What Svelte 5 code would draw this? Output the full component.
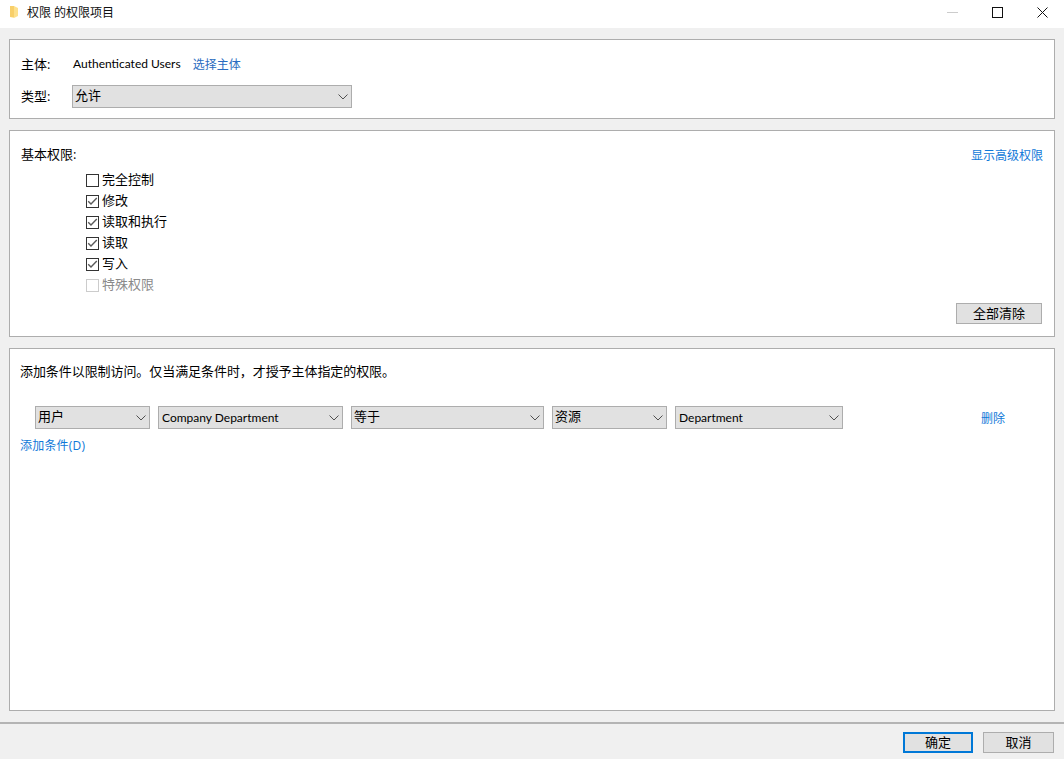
<script>
  const perms = [
    { label: "完全控制", checked: false },
    { label: "修改", checked: true },
    { label: "读取和执行", checked: true },
    { label: "读取", checked: true },
    { label: "写入", checked: true },
    { label: "特殊权限", checked: false, disabled: true }
  ];

  const conditions = [
    { text: "用户", width: 115 },
    { text: "Company Department", width: 185, latin: true },
    { text: "等于", width: 193 },
    { text: "资源", width: 115 },
    { text: "Department", width: 168, latin: true }
  ];
</script>

{#snippet chevron()}
  <svg class="chev" width="10" height="6" viewBox="0 0 10 6" aria-hidden="true">
    <path d="M0.5 0.5 L5 5 L9.5 0.5" fill="none" stroke="#505050" stroke-width="1" />
  </svg>
{/snippet}

<div class="window">
  <header class="titlebar">
    <svg class="folder" width="10" height="14" viewBox="0 0 10 14" aria-hidden="true">
      <path d="M1 1 H5 L9 3 V11 L5 13 L1 12 Z" fill="#fde08c" />
      <path d="M1 1 H5 V12 H1 Z" fill="#f8cf6a" />
    </svg>
    <span class="title">权限 的权限项目</span>
    <div class="controls">
      <span class="ctl">
        <svg width="11" height="11" viewBox="0 0 11 11"><path d="M0 5.5 H11" stroke="#ccc" /></svg>
      </span>
      <span class="ctl">
        <svg width="11" height="11" viewBox="0 0 11 11"><rect x="0.5" y="0.5" width="10" height="10" fill="none" stroke="#111" /></svg>
      </span>
      <span class="ctl">
        <svg width="11" height="11" viewBox="0 0 11 11"><path d="M0.5 0.5 L10.5 10.5 M10.5 0.5 L0.5 10.5" stroke="#111" /></svg>
      </span>
    </div>
  </header>

  <main class="content">
    <section class="panel principal">
      <div class="row">
        <span class="lbl">主体:</span>
        <span class="latin">Authenticated Users</span>
        <span class="link pick">选择主体</span>
      </div>
      <div class="row">
        <span class="lbl">类型:</span>
        <div class="select" style="width: 280px">
          <span>允许</span>
          {@render chevron()}
        </div>
      </div>
    </section>

    <section class="panel basic">
      <div class="basic-head">
        <span>基本权限:</span>
        <span class="link bright adv">显示高级权限</span>
      </div>
      <ul class="perms">
        {#each perms as p}
          <li class:disabled={p.disabled}>
            <span class="box">
              {#if p.checked}
                <svg width="11" height="11" viewBox="0 0 11 11" aria-hidden="true">
                  <path d="M1.2 5.2 L4 8 L9.8 2" fill="none" stroke="#5a5a5a" stroke-width="1.4" />
                </svg>
              {/if}
            </span>
            {p.label}
          </li>
        {/each}
      </ul>
      <div class="clear-row">
        <button class="btn clear" type="button">全部清除</button>
      </div>
    </section>

    <section class="panel cond">
      <p class="hint">添加条件以限制访问。仅当满足条件时，才授予主体指定的权限。</p>
      <div class="cond-row">
        {#each conditions as c}
          <div class="select" style="width: {c.width}px">
            <span class:latin={c.latin}>{c.text}</span>
            {@render chevron()}
          </div>
        {/each}
        <span class="link bright remove">删除</span>
      </div>
      <span class="link bright add">添加条件(D)</span>
    </section>
  </main>

  <footer class="footer">
    <button class="btn ok" type="button">确定</button>
    <button class="btn cancel" type="button">取消</button>
  </footer>
</div>

<style>
  :global(body) {
    margin: 0;
    background: #f0f0f0;
  }

  .window {
    display: flex;
    flex-direction: column;
    width: 1064px;
    height: 759px;
    overflow: hidden;
    background: #f0f0f0;
    color: #000;
    font-family: "Open Sans", "Noto Sans CJK SC", sans-serif;
    font-size: 13px;
  }

  .titlebar {
    display: flex;
    align-items: center;
    flex: none;
    height: 28px;
    padding: 0 0 4px 9px;
    box-sizing: border-box;
    background: #fff;
  }

  .folder {
    margin-right: 8px;
  }

  .title {
    font-size: 12px;
    color: #111;
  }

  .controls {
    display: flex;
    margin-left: auto;
    margin-right: -1px;
  }

  .ctl {
    display: flex;
    justify-content: center;
    width: 45px;
  }

  .content {
    display: flex;
    flex-direction: column;
    flex: 1;
    gap: 11px;
    padding: 11px 9px 0;
    min-height: 0;
  }

  .panel {
    box-sizing: border-box;
    border: 1px solid #adadad;
    background: #fff;
  }

  .principal {
    display: flex;
    flex-direction: column;
    gap: 10px;
    height: 80px;
    padding: 13px 11px 0;
  }

  .row {
    display: flex;
    align-items: center;
    min-height: 22px;
  }

  .lbl {
    width: 51px;
    margin-right: 1px;
    margin-bottom: 2px;
  }

  .row .select {
    margin-left: -1px;
  }

  .latin {
    font-family: "Lato", "Noto Sans CJK SC", sans-serif;
    font-size: 12px;
  }

  .row > .latin {
    margin-bottom: 2px;
  }

  .pick {
    margin-left: 12px;
  }

  .link {
    color: #2a6cc0;
    font-size: 12px;
  }

  .bright {
    color: #0f78d8;
  }

  .adv {
    position: relative;
    top: 2px;
  }

  .select {
    display: flex;
    align-items: center;
    justify-content: space-between;
    flex: none;
    box-sizing: border-box;
    height: 23px;
    padding: 0 3px 0 2px;
    border: 1px solid #adadad;
    background: #e1e1e1;
    line-height: 1;
  }

  .select span {
    margin-bottom: 2px;
  }

  .select span.latin {
    margin: 0 0 0 1px;
  }

  .basic {
    height: 207px;
    padding: 14px 11px 0;
  }

  .basic-head {
    display: flex;
    justify-content: space-between;
    height: 20px;
    line-height: 18px;
  }

  .perms {
    margin: 3px 0 0;
    padding: 0 0 0 65px;
    list-style: none;
  }

  .perms li {
    display: flex;
    align-items: center;
    gap: 3px;
    height: 21px;
  }

  .perms li.disabled {
    color: #8a8a8a;
  }

  .box {
    display: flex;
    align-items: center;
    justify-content: center;
    flex: none;
    box-sizing: border-box;
    width: 13px;
    height: 13px;
    margin-top: 4px;
    border: 1px solid #333;
    background: #fff;
  }

  .disabled .box {
    border-color: #ccc;
  }

  .clear-row {
    display: flex;
    justify-content: flex-end;
    margin-top: 9px;
  }

  .btn {
    box-sizing: border-box;
    height: 21px;
    padding: 0;
    border: 1px solid #adadad;
    background: #e1e1e1;
    color: #000;
    font: inherit;
    line-height: 1;
  }

  .clear {
    width: 86px;
    margin-right: 1px;
  }

  .cond {
    flex: none;
    height: 363px;
    padding: 12px 11px 0;
  }

  .hint {
    margin: 0 0 0 -1px;
    line-height: 20px;
    letter-spacing: -0.07px;
  }

  .cond-row {
    display: flex;
    align-items: center;
    gap: 8px;
    margin: 25px 0 0 14px;
  }

  .remove {
    margin-left: 130px;
  }

  .add {
    display: block;
    margin: 7px 0 0 -1px;
    letter-spacing: 0.2px;
  }

  .footer {
    display: flex;
    justify-content: flex-end;
    gap: 10px;
    flex: none;
    box-sizing: border-box;
    height: 37px;
    padding: 8px 10px 0 0;
    border-top: 2px solid #b4b4b4;
    background: #f0f0f0;
  }

  .ok,
  .cancel {
    width: 71px;
    height: 21px;
  }

  .ok {
    width: 70px;
    border: 2px solid #0078d7;
  }
</style>
